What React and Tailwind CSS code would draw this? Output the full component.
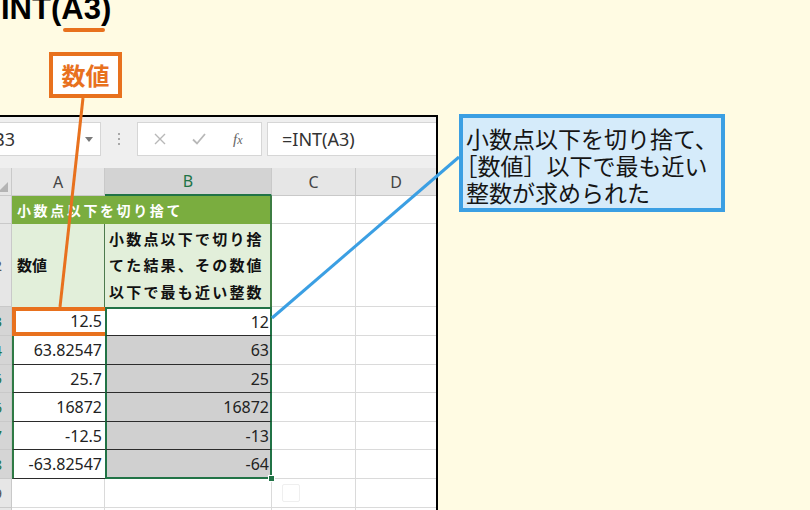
import React from "react";

const jp = { fontFamily: '"Noto Sans CJK JP", "Noto Sans", sans-serif' };
const num = { fontFamily: '"Noto Sans", "Liberation Sans", sans-serif' };

const data = [
  { n: 3, a: "12.5", b: "12", h: "h-[29px]" },
  { n: 4, a: "63.82547", b: "63", h: "h-[29px]" },
  { n: 5, a: "25.7", b: "25", h: "h-[28px]" },
  { n: 6, a: "16872", b: "16872", h: "h-[29px]" },
  { n: 7, a: "-12.5", b: "-13", h: "h-[28px]" },
  { n: 8, a: "-63.82547", b: "-64", h: "h-[29px]" },
];

function RowHead({ n, selected }) {
  return (
    <div
      className={`w-[30px] shrink-0 flex items-center justify-end pr-[9px] border-b border-r border-[#c9c9c9] text-[15px] ${
        selected ? "bg-[#d5d5d5] text-[#217346]" : "bg-[#e6e6e6] text-[#555]"
      }`}
      style={num}
    >
      {n}
    </div>
  );
}

function Blank({ paste }) {
  return (
    <>
      <div className="w-[84px] shrink-0 bg-white border-b border-r border-[#dadada] flex items-center pl-[10px]">
        {paste && <div className="w-[18px] h-[18px] border border-[#efefef] rounded-[2px]" />}
      </div>
      <div className="w-[100px] shrink-0 bg-white border-b border-r border-[#dadada]" />
    </>
  );
}

function Sheet() {
  return (
    <div className="w-[438px] h-[395px] shrink-0 border-t-2 border-r-2 border-black overflow-hidden bg-white">
      <div className="-ml-[18px] w-[480px]">
        {/* formula bar */}
        <div className="h-[51px] bg-[#efefef] flex items-start pt-[5px]">
          <div
            className="w-[119px] h-[34px] bg-white border border-[#d6d6d6] flex items-center pl-[10px] pr-[7px] text-[18px] text-[#333]"
            style={num}
          >
            <span className="flex-1">B3</span>
            <svg width="8" height="5" viewBox="0 0 8 5">
              <path d="M0 0 L8 0 L4 5 Z" fill="#7a7a7a" />
            </svg>
          </div>
          <div className="w-[36px] h-[34px] flex flex-col items-center justify-center gap-[3px]">
            <span className="w-[2px] h-[2px] bg-[#a8a8a8]" />
            <span className="w-[2px] h-[2px] bg-[#a8a8a8]" />
            <span className="w-[2px] h-[2px] bg-[#a8a8a8]" />
          </div>
          <div className="w-[125px] h-[34px] bg-white border border-[#d6d6d6] flex items-center">
            <svg width="12" height="12" viewBox="0 0 12 12" className="ml-[16px]">
              <path d="M1 1 L11 11 M11 1 L1 11" stroke="#b8b8b8" strokeWidth="1.4" />
            </svg>
            <svg width="14" height="12" viewBox="0 0 14 12" className="ml-[26px]">
              <path d="M1 6.5 L5 10.5 L13 1" stroke="#b8b8b8" strokeWidth="1.8" fill="none" />
            </svg>
            <span
              className="ml-[27px] italic text-[15px] text-[#666]"
              style={{ fontFamily: '"Liberation Serif", serif' }}
            >
              f<span className="text-[12px]">x</span>
            </span>
          </div>
          <div
            className="ml-[5px] flex-1 h-[34px] bg-white border border-[#d6d6d6] flex items-center pl-[14px] text-[18px] text-[#333]"
            style={num}
          >
            =INT(A3)
          </div>
        </div>

        {/* column header */}
        <div className="h-[28px] flex text-[16px]" style={num}>
          <div className="w-[30px] shrink-0 bg-[#e6e6e6] border-r border-b border-[#c9c9c9] flex items-end justify-end pr-[3px] pb-[3px]">
            <svg width="10" height="10" viewBox="0 0 10 10">
              <path d="M10 0 L10 10 L0 10 Z" fill="#b4b4b4" />
            </svg>
          </div>
          <div className="w-[93px] shrink-0 bg-[#e6e6e6] border-r border-b border-[#c9c9c9] flex items-center justify-center text-[#444]">
            A
          </div>
          <div className="w-[167px] shrink-0 bg-[#d3d3d3] border-r border-[#c9c9c9] border-b-2 border-b-[#217346] flex items-center justify-center text-[#217346]">
            B
          </div>
          <div className="w-[84px] shrink-0 bg-[#e6e6e6] border-r border-b border-[#c9c9c9] flex items-center justify-center text-[#444]">
            C
          </div>
          <div className="w-[100px] shrink-0 bg-[#e6e6e6] border-r border-b border-[#c9c9c9] flex items-center justify-center pr-[19px] text-[#444]">
            D
          </div>
        </div>

        {/* row 1 */}
        <div className="h-[28px] flex">
          <RowHead n={1} />
          <div
            className="w-[260px] shrink-0 bg-[#7aad3f] border-r-2 border-[#3d7d43] flex items-center pl-[5px] text-white font-bold text-[14px] tracking-[2.6px]"
            style={jp}
          >
            小数点以下を切り捨て
          </div>
          <Blank />
        </div>

        {/* row 2 */}
        <div className="h-[83px] flex">
          <RowHead n={2} />
          <div
            className="w-[93px] shrink-0 bg-[#e2efda] border-r border-[#4d7a4d] flex items-center pl-[5px] font-bold text-[15px] text-[#111]"
            style={jp}
          >
            数値
          </div>
          <div
            className="w-[167px] shrink-0 bg-[#e2efda] border-r-2 border-[#3d7d43] flex flex-col justify-center pl-[4px] font-bold text-[15px] tracking-[2.2px] leading-[26.5px] text-[#111]"
            style={jp}
          >
            <span>小数点以下で切り捨</span>
            <span>てた結果、その数値</span>
            <span>以下で最も近い整数</span>
          </div>
          <Blank />
        </div>

        {/* data rows */}
        {data.map((r, i) => {
          const first = i === 0;
          const last = i === data.length - 1;
          return (
            <div key={r.n} className={`${r.h} flex text-[16px] text-[#222]`} style={num}>
              <RowHead n={r.n} selected />
              <div className="relative w-[93px] shrink-0 bg-white border-l-2 border-l-[#2f7a45] border-b border-b-[#2b2b2b] flex items-center justify-end pr-[3px]">
                {r.a}
                {first && (
                  <div className="absolute -left-[2px] -right-[4px] top-0 -bottom-[1px] border-[4px] border-[#e8711e]" />
                )}
              </div>
              <div
                className={`relative w-[167px] shrink-0 border-x-2 border-x-[#217346] flex items-center justify-end pr-[1px] ${
                  first ? "bg-white border-t-2 border-t-[#217346]" : "bg-[#d0d0d0]"
                } ${last ? "border-b-2 border-b-[#217346]" : "border-b border-b-[#2b2b2b]"}`}
              >
                {r.b}
                {last && (
                  <div className="absolute -right-[5px] -bottom-[5px] w-[7px] h-[7px] bg-[#217346] border border-white" />
                )}
              </div>
              <Blank />
            </div>
          );
        })}

        {/* empty rows */}
        <div className="h-[29px] flex">
          <RowHead n={9} />
          <div className="w-[93px] shrink-0 bg-white border-b border-r border-[#dadada]" />
          <div className="w-[167px] shrink-0 bg-white border-b border-r border-[#dadada]" />
          <Blank paste />
        </div>
        <div className="h-[29px] flex">
          <RowHead n={10} />
          <div className="w-[93px] shrink-0 bg-white border-b border-r border-[#dadada]" />
          <div className="w-[167px] shrink-0 bg-white border-b border-r border-[#dadada]" />
          <Blank />
        </div>
      </div>
    </div>
  );
}

export default function App() {
  return (
    <div className="relative w-[810px] h-[510px] overflow-hidden bg-[#fffbe3]">
      {/* title */}
      <div className="relative h-[52px] flex flex-col">
        <div
          className="-mt-[7px] ml-[1px] text-[31px] leading-[31px] font-bold text-black"
          style={{ fontFamily: '"Liberation Sans", Arial, sans-serif' }}
        >
          INT(A3)
        </div>
        <div className="absolute left-[63px] top-[28px] w-[42px] h-[4px] rounded-full bg-[#e8711e]" />
      </div>

      {/* label */}
      <div
        className="ml-[49px] w-[73px] h-[46px] border-[4px] border-[#e8711e] bg-white flex items-center justify-center text-[#e8711e] font-bold text-[24px]"
        style={jp}
      >
        数値
      </div>

      <div className="mt-[17px] flex items-start">
        <Sheet />
        <div
          className="-mt-[1px] ml-[21px] w-[266px] h-[98px] border-[4px] border-[#3b9fe3] bg-[#d5ebfa] pl-[3px] pt-[7px] text-[23px] leading-[27px] text-[#151515] whitespace-nowrap"
          style={jp}
        >
          <div>小数点以下を切り捨て、</div>
          <div>
            <span style={{ fontFeatureSettings: '"halt"' }}>［</span>数値］以下で最も近い
          </div>
          <div>整数が求められた</div>
        </div>
      </div>

      {/* annotation lines */}
      <svg className="absolute inset-0 pointer-events-none" width="810" height="510" viewBox="0 0 810 510">
        <line x1="83" y1="98" x2="60" y2="307" stroke="#e8711e" strokeWidth="3" />
        <line x1="459" y1="157" x2="272" y2="318" stroke="#3b9fe3" strokeWidth="3" />
      </svg>
    </div>
  );
}
